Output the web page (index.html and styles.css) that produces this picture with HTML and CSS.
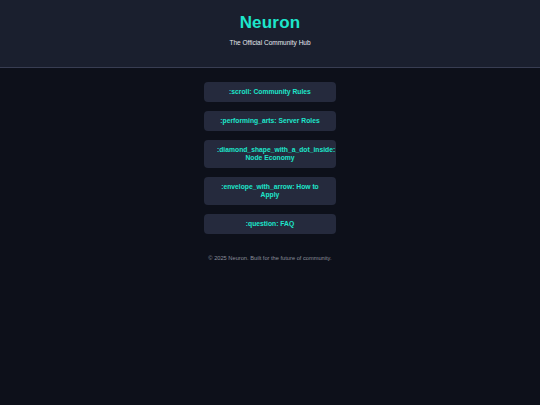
FILE: index.html
```html
<!DOCTYPE html>
<html lang="en">
<head>
<meta charset="utf-8">
<title>Neuron</title>
<link rel="stylesheet" href="styles.css">
</head>
<body>
<header class="site-header">
  <h1 class="title">Neuron</h1>
  <p class="subtitle">The Official Community Hub</p>
</header>
<main class="content">
  <nav class="links">
    <a class="link-btn" href="#">:scroll: Community Rules</a>
    <a class="link-btn" href="#">:performing_arts: Server Roles</a>
    <a class="link-btn" href="#">:diamond_shape_with_a_dot_inside: Node Economy</a>
    <a class="link-btn" href="#">:envelope_with_arrow: How to Apply</a>
    <a class="link-btn" href="#">:question: FAQ</a>
  </nav>
  <footer class="site-footer">© 2025 Neuron. Built for the future of community.</footer>
</main>
</body>
</html>
```
FILE: styles.css
```css
html, body {
  margin: 0;
  padding: 0;
}
body {
  background: #0d101a;
  font-family: "Liberation Sans", Arial, sans-serif;
  min-height: 405px;
}
.site-header {
  background: #1a1f2e;
  border-bottom: 1px solid #383d52;
  padding: 12px 0 20px;
  text-align: center;
}
.title {
  margin: 0;
  font-size: 17px;
  line-height: 22px;
  font-weight: bold;
  letter-spacing: 0.2px;
  color: #1de6cb;
}
.subtitle {
  margin: 5px 0 0;
  font-size: 6.5px;
  line-height: 8px;
  color: #e6e8ee;
}
.content {
  display: flex;
  flex-direction: column;
  align-items: center;
  padding-top: 14px;
}
.links {
  display: flex;
  flex-direction: column;
  gap: 9px;
}
.link-btn {
  display: block;
  width: 132px;
  box-sizing: border-box;
  padding: 6px 13px;
  background: #252a3d;
  border-radius: 4px;
  color: #1de6cb;
  font-size: 6.75px;
  line-height: 8px;
  font-weight: bold;
  text-align: center;
  text-decoration: none;
}
.site-footer {
  margin-top: 21px;
  font-size: 5.7px;
  line-height: 7px;
  color: #8a8e9b;
}
```
